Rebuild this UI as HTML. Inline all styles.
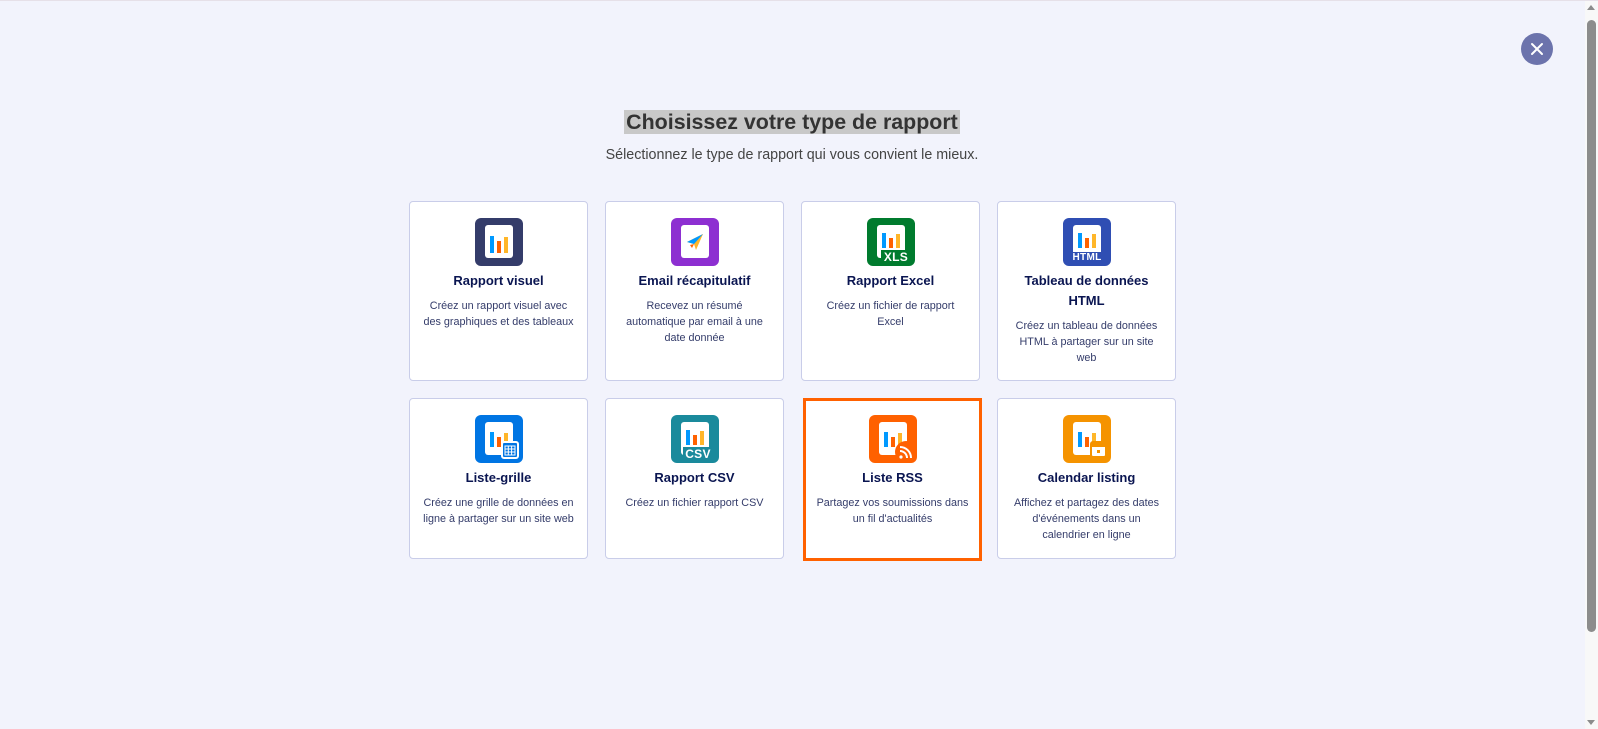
<!DOCTYPE html>
<html><head><meta charset="utf-8"><style>
*{box-sizing:border-box;margin:0;padding:0}
html,body{width:1598px;height:729px;overflow:hidden}
body{background:#f2f3fc;font-family:"Liberation Sans",sans-serif;position:relative;border-top:1px solid #e6e0e8}
.close{position:absolute;left:1521px;top:32px;width:32px;height:32px;border-radius:50%;background:#6c73ac}
.sb{position:absolute;left:1585px;top:0;width:13px;height:729px;background:#f8f8f8}
.sb .th{position:absolute;left:2px;top:19px;width:9px;height:612px;background:#8c8c8c;border-radius:5px}
.sb .up{position:absolute;left:2px;top:4px;border:4.5px solid transparent;border-bottom:5px solid #8c8c8c;border-top:0}
.sb .dn{position:absolute;left:2px;top:719px;border:4.5px solid transparent;border-top:5px solid #8c8c8c;border-bottom:0}
h1{position:absolute;left:0;width:1584px;top:109px;text-align:center;font-size:21.4px;font-weight:bold;color:#333}
h1 span{background:#c8c8c8;padding:0 2px}
.sub{position:absolute;left:0;width:1584px;top:146px;text-align:center;font-size:14.3px;color:#444}
.card{position:absolute;width:179px;background:#fff;border:1px solid #c9cde9;border-radius:4px;text-align:center}
.card.sel{border:3px solid #ff6100;border-radius:0}
.ic{position:absolute;left:65px;top:16px;width:48px;height:48px;border-radius:6px}
.sel .ic{left:63px;top:14px}
.ic .in{position:absolute;left:10px;top:7px;width:28px;height:33px;background:#fff;border-radius:3px}
.ic .b{position:absolute;bottom:9px;width:4px}
.t{position:absolute;left:0;right:0;top:69px;font-size:13px;font-weight:bold;color:#0a1551;line-height:20px}
.d{position:absolute;left:12px;right:12px;font-size:10.8px;color:#343c6a;line-height:16px}
.sel .t{top:67px}
.badge{position:absolute;color:#fff;font-weight:bold;font-size:11px;bottom:1px;left:0;right:0;text-align:center;letter-spacing:.3px}
</style></head><body>
<div class="close"><svg width="32" height="32"><path d="M11 11L21 21M21 11L11 21" stroke="#fff" stroke-width="2" stroke-linecap="round"/></svg></div>
<div class="sb"><div class="up"></div><div class="th"></div><div class="dn"></div></div>
<h1><span>Choisissez votre type de rapport</span></h1>
<div class="sub">Sélectionnez le type de rapport qui vous convient le mieux.</div>

<div class="card" style="left:409px;top:200px;height:180px">
<div class="ic" style="background:#343c6a"><div class="in"><div class="b" style="left:5px;height:17px;background:#0099ff;bottom:5px"></div><div class="b" style="left:12px;height:12px;background:#ff6100;bottom:5px"></div><div class="b" style="left:19px;height:16px;background:#ffb629;bottom:5px"></div></div></div>
<div class="t">Rapport visuel</div><div class="d" style="top:96px">Créez un rapport visuel avec des graphiques et des tableaux</div></div>

<div class="card" style="left:605px;top:200px;height:180px">
<div class="ic" style="background:#8d2fd1"><div class="in"><svg width="28" height="33" style="position:absolute;left:0;top:0"><path d="M6 17L22 9L15 25L13 19Z" fill="#ffb629"/><path d="M6 17L22 9L13 19Z" fill="#0099ff"/><path d="M9 20L13 19L11 23Z" fill="#ff6100"/></svg></div></div>
<div class="t">Email récapitulatif</div><div class="d" style="top:96px">Recevez un résumé automatique par email à une date donnée</div></div>

<div class="card" style="left:801px;top:200px;height:180px">
<div class="ic" style="background:#007b2e"><div class="in"><div class="b" style="left:5px;height:15px;background:#0099ff;bottom:10px"></div><div class="b" style="left:12px;height:10px;background:#ff6100;bottom:10px"></div><div class="b" style="left:19px;height:14px;background:#ffb629;bottom:10px"></div></div><div class="badge" style="background:#007b2e;left:14px;right:4px;bottom:2px;font-size:12px">XLS</div></div>
<div class="t">Rapport Excel</div><div class="d" style="top:96px;left:20px;right:20px">Créez un fichier de rapport Excel</div></div>

<div class="card" style="left:997px;top:200px;height:180px">
<div class="ic" style="background:#2f4eb3"><div class="in"><div class="b" style="left:5px;height:15px;background:#0099ff;bottom:10px"></div><div class="b" style="left:12px;height:10px;background:#ff6100;bottom:10px"></div><div class="b" style="left:19px;height:14px;background:#ffb629;bottom:10px"></div></div><div class="badge" style="background:#2f4eb3;left:8px;right:8px;bottom:3px;font-size:10px">HTML</div></div>
<div class="t">Tableau de données<br>HTML</div><div class="d" style="top:116px;left:14px;right:14px">Créez un tableau de données HTML à partager sur un site web</div></div>

<div class="card" style="left:409px;top:397px;height:161px">
<div class="ic" style="background:#0075e3"><div class="in"><div class="b" style="left:5px;height:15px;background:#0099ff;bottom:8px"></div><div class="b" style="left:12px;height:10px;background:#ff6100;bottom:8px"></div><div class="b" style="left:19px;height:14px;background:#ffb629;bottom:8px"></div></div><div style="position:absolute;left:26px;top:26px;width:18px;height:18px;background:#0075e3;border-radius:3px;border:2px solid #fff"><svg width="14" height="14" style="position:absolute;left:0;top:0"><path d="M2 3h10v9H2zM2 6h10M2 9h10M5.3 3v9M8.6 3v9" stroke="#fff" stroke-width="1" fill="none"/></svg></div></div>
<div class="t">Liste-grille</div><div class="d" style="top:96px">Créez une grille de données en ligne à partager sur un site web</div></div>

<div class="card" style="left:605px;top:397px;height:161px">
<div class="ic" style="background:#1a8a9c"><div class="in"><div class="b" style="left:5px;height:15px;background:#0099ff;bottom:10px"></div><div class="b" style="left:12px;height:10px;background:#ff6100;bottom:10px"></div><div class="b" style="left:19px;height:14px;background:#ffb629;bottom:10px"></div></div><div class="badge" style="background:#1a8a9c;left:12px;right:6px;bottom:2px;font-size:12px">CSV</div></div>
<div class="t">Rapport CSV</div><div class="d" style="top:96px;left:6px;right:6px">Créez un fichier rapport CSV</div></div>

<div class="card sel" style="left:803px;top:397px;height:163px">
<div class="ic" style="background:#ff6100"><div class="in"><div class="b" style="left:5px;height:15px;background:#0099ff;bottom:8px"></div><div class="b" style="left:12px;height:10px;background:#ff6100;bottom:8px"></div><div class="b" style="left:19px;height:14px;background:#ffb629;bottom:8px"></div></div><svg width="22" height="22" style="position:absolute;left:26px;top:26px"><circle cx="11" cy="11" r="11" fill="#ff6100"/><circle cx="6" cy="16" r="1.6" fill="#fff"/><path d="M5 10a7 7 0 0 1 7 7M5 6a11 11 0 0 1 11 11" stroke="#fff" stroke-width="2" fill="none"/></svg></div>
<div class="t">Liste RSS</div><div class="d" style="top:94px;left:6px;right:6px">Partagez vos soumissions dans un fil d'actualités</div></div>

<div class="card" style="left:997px;top:397px;height:161px">
<div class="ic" style="background:#f59300"><div class="in"><div class="b" style="left:5px;height:15px;background:#0099ff;bottom:8px"></div><div class="b" style="left:12px;height:10px;background:#ff6100;bottom:8px"></div><div class="b" style="left:19px;height:14px;background:#ffb629;bottom:8px"></div></div><div style="position:absolute;left:27px;top:26px;width:17px;height:17px;background:#fff;border-radius:3px;border:2px solid #f59300"><div style="position:absolute;left:0;right:0;top:0;height:4px;background:#f59300"></div><div style="position:absolute;left:5px;top:7px;width:3px;height:3px;background:#f59300"></div></div></div>
<div class="t">Calendar listing</div><div class="d" style="top:96px;left:10px;right:10px">Affichez et partagez des dates d'événements dans un calendrier en ligne</div></div>
</body></html>
